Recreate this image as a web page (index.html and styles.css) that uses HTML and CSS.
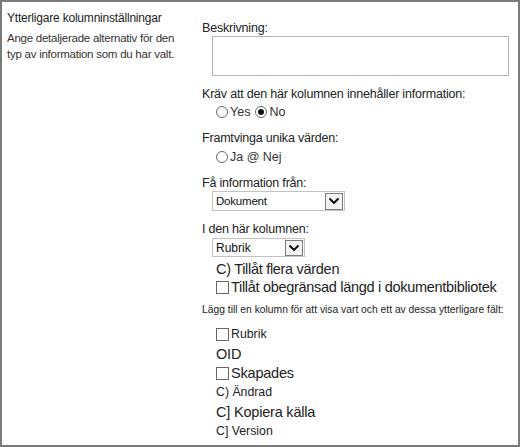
FILE: index.html
```html
<!DOCTYPE html>
<html lang="sv">
<head>
<meta charset="utf-8">
<title>Ytterligare kolumninställningar</title>
<link rel="stylesheet" href="styles.css">
</head>
<body>
<div class="panel">
  <div class="left">
    <div class="title">Ytterligare kolumninställningar</div>
    <div class="desc">Ange detaljerade alternativ för den typ av information som du har valt.</div>
  </div>
  <div class="right">
    <div class="lbl r-besk">Beskrivning:</div>
    <div class="textarea"></div>
    <div class="lbl r-krav">Kräv att den här kolumnen innehåller information:</div>
    <div class="opts r-yesno">
      <span class="radio"></span><span class="otext">Yes</span>
      <span class="radio checked"></span><span class="otext">No</span>
    </div>
    <div class="lbl r-fram">Framtvinga unika värden:</div>
    <div class="opts r-janej">
      <span class="radio"></span><span class="otext">Ja @ Nej</span>
    </div>
    <div class="lbl r-fa">Få information från:</div>
    <div class="select wide"><span class="sval">Dokument</span><span class="sarrow"><svg width="12" height="8" viewBox="0 0 12 8"><path d="M1.5 1.5 L6 6 L10.5 1.5" fill="none" stroke="#000" stroke-width="1.8"/></svg></span></div>
    <div class="lbl r-iden">I den här kolumnen:</div>
    <div class="select narrow"><span class="sval">Rubrik</span><span class="sarrow"><svg width="12" height="8" viewBox="0 0 12 8"><path d="M1.5 1.5 L6 6 L10.5 1.5" fill="none" stroke="#000" stroke-width="1.8"/></svg></span></div>
    <div class="big r-flera">C) Tillåt flera värden</div>
    <div class="big r-obeg"><span class="check"></span>Tillåt obegränsad längd i dokumentbibliotek</div>
    <div class="small r-lagg">Lägg till en kolumn för att visa vart och ett av dessa ytterligare fält:</div>
    <div class="mid r-rubrik"><span class="check"></span>Rubrik</div>
    <div class="large r-oid">OID</div>
    <div class="large r-skap"><span class="check"></span>Skapades</div>
    <div class="mid r-andrad">C) Ändrad</div>
    <div class="large r-kop">C] Kopiera källa</div>
    <div class="mid r-ver">C] Version</div>
  </div>
</div>
</body>
</html>
```
FILE: styles.css
```css
html, body {
  margin: 0;
  padding: 0;
  background: #fff;
}
body {
  font-family: "Liberation Sans", Arial, sans-serif;
  color: #222;
}
.panel {
  box-sizing: border-box;
  width: 520px;
  height: 447px;
  border: 2px solid #7a7a7a;
  display: flex;
}
.left {
  width: 194px;
  padding: 8px 0 0 5px;
  box-sizing: border-box;
}
.title {
  font-size: 12px;
  line-height: 16px;
  letter-spacing: -0.2px;
  color: #222;
}
.desc {
  width: 172px;
  margin-top: 4px;
  font-size: 11.5px;
  line-height: 16px;
  letter-spacing: -0.25px;
  color: #333;
}
.right {
  flex: 1;
  padding-left: 6px;
  display: flex;
  flex-direction: column;
}
.lbl {
  font-size: 12.5px;
  line-height: 16px;
  letter-spacing: -0.2px;
  color: #222;
  height: 16px;
}
.r-besk { margin-top: 18px; }
.textarea {
  margin: 0 0 0 10px;
  width: 297px;
  height: 40px;
  box-sizing: border-box;
  border: 1px solid #b4b4b4;
}
.r-krav { margin-top: 10px; }
.opts {
  display: flex;
  align-items: center;
  height: 16px;
  padding-left: 14px;
  font-size: 12.5px;
  color: #333;
}
.r-yesno { margin-top: 2px; }
.radio {
  width: 12px;
  height: 12px;
  border: 1px solid #666;
  border-radius: 50%;
  box-sizing: border-box;
  display: inline-flex;
  align-items: center;
  justify-content: center;
  margin-right: 2px;
}
.radio.checked::after {
  content: "";
  width: 6px;
  height: 6px;
  border-radius: 50%;
  background: #111;
}
.otext { margin-right: 5px; }
.r-fram { margin-top: 10px; }
.r-janej { margin-top: 3px; }
.r-fa { margin-top: 10px; }
.select {
  margin: 0 0 0 10px;
  height: 20px;
  box-sizing: border-box;
  border: 1px solid #c2c2c2;
  display: flex;
  align-items: center;
  justify-content: space-between;
  padding: 0 1px 0 3px;
  font-size: 11.5px;
  letter-spacing: -0.2px;
  color: #111;
}
.select.wide { width: 133px; margin-top: 0; }
.select.narrow { width: 93px; margin-top: 1px; height: 19px; font-size: 12px; letter-spacing: 0; }
.sarrow {
  width: 18px;
  height: 17px;
  box-sizing: border-box;
  border: 1px solid #7d7d7d;
  background: #f3f3f3;
  display: flex;
  align-items: center;
  justify-content: center;
}
.select.narrow .sarrow { height: 16px; }
.r-iden { margin-top: 10px; }
.big {
  font-size: 14.5px;
  line-height: 18px;
  height: 18px;
  letter-spacing: -0.3px;
  padding-left: 14px;
  color: #222;
  display: flex;
  align-items: center;
}
.r-flera { margin-top: 3px; }
.check {
  width: 13px;
  height: 13px;
  box-sizing: border-box;
  border: 1px solid #666;
  margin-right: 2px;
  flex: none;
}
.small {
  font-size: 10.3px;
  line-height: 16px;
  height: 16px;
  color: #222;
}
.r-lagg { margin-top: 6px; }
.mid {
  font-size: 12.3px;
  line-height: 18px;
  height: 18px;
  padding-left: 14px;
  display: flex;
  align-items: center;
  color: #222;
}
.large {
  font-size: 14.5px;
  line-height: 18px;
  height: 18px;
  letter-spacing: -0.2px;
  padding-left: 14px;
  display: flex;
  align-items: center;
  color: #222;
}
.r-rubrik { margin-top: 7px; }
.r-oid { margin-top: 2px; }
.r-skap { margin-top: 1px; }
.r-andrad { margin-top: 1px; }
.r-kop { margin-top: 2px; }
.r-ver { margin-top: 1px; }
```
